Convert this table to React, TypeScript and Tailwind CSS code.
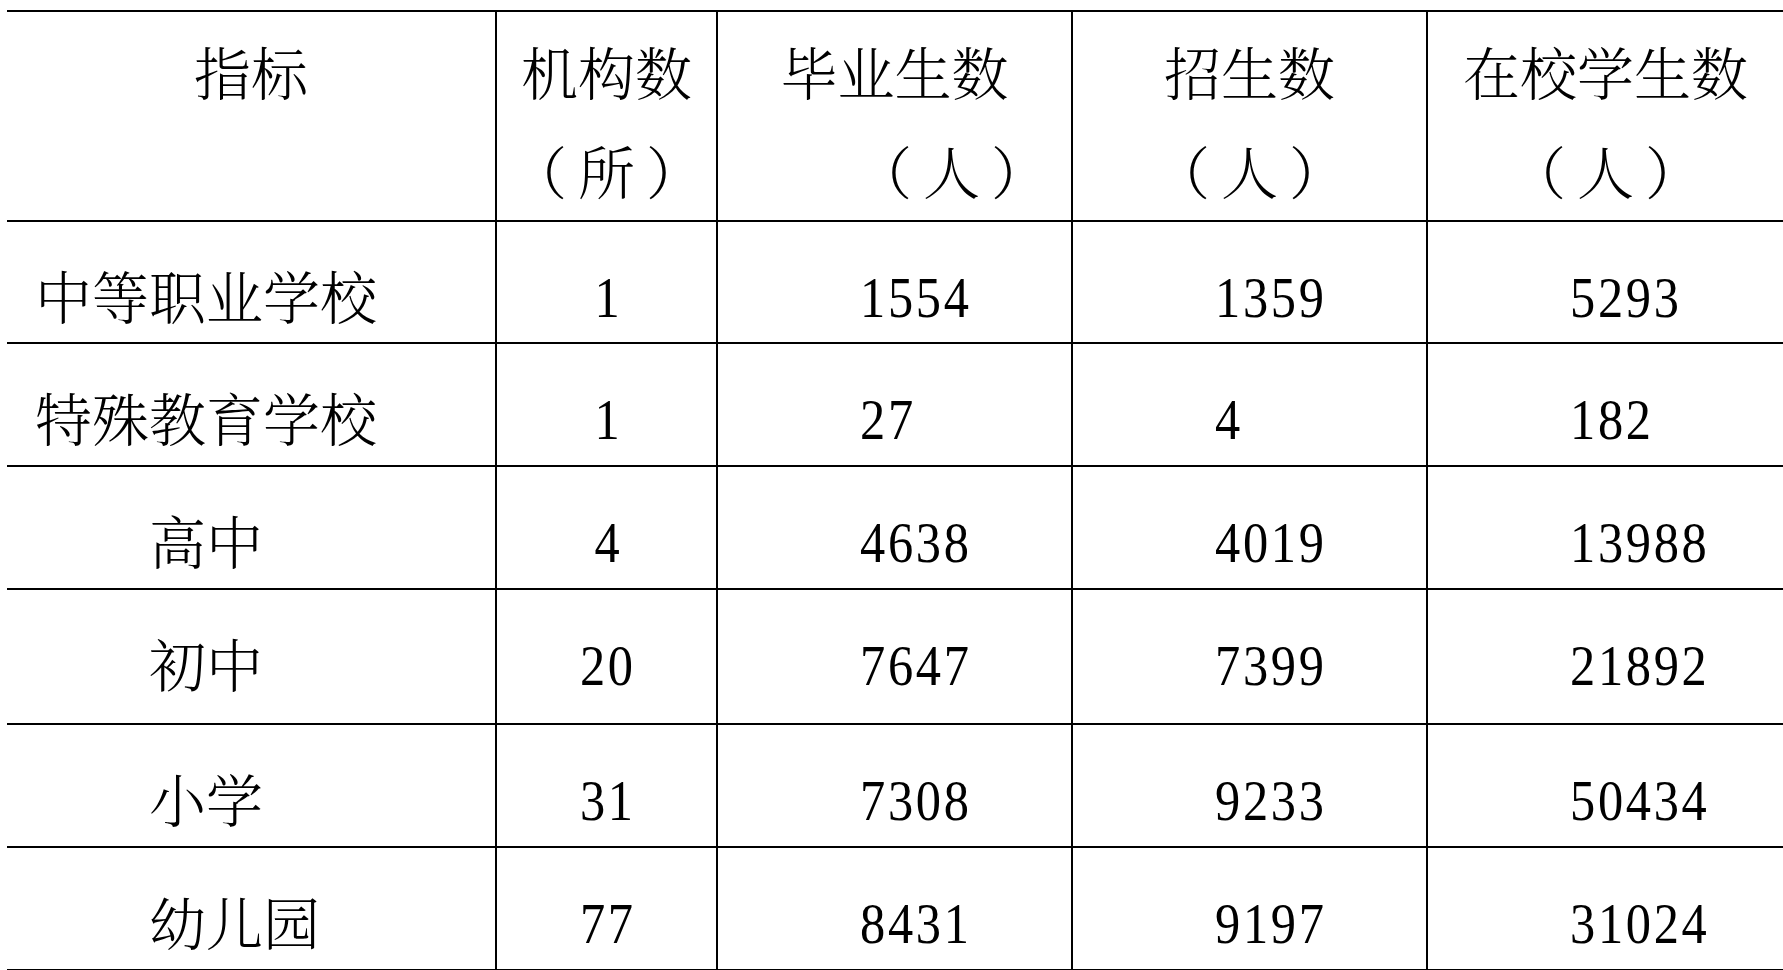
import React from "react";

const FONT =
  "[font-family:'Liberation_Serif','Noto_Serif_CJK_SC','Noto_Sans_CJK_SC',serif]";

type Row = {
  label: string;
  indent: boolean;
  h: string;
  v: [string, string, string, string];
};

const rows: Row[] = [
  { label: "中等职业学校", indent: false, h: "h-[122px]", v: ["1", "1554", "1359", "5293"] },
  { label: "特殊教育学校", indent: false, h: "h-[123px]", v: ["1", "27", "4", "182"] },
  { label: "高中", indent: true, h: "h-[123px]", v: ["4", "4638", "4019", "13988"] },
  { label: "初中", indent: true, h: "h-[135px]", v: ["20", "7647", "7399", "21892"] },
  { label: "小学", indent: true, h: "h-[123px]", v: ["31", "7308", "9233", "50434"] },
  { label: "幼儿园", indent: true, h: "h-[123px]", v: ["77", "8431", "9197", "31024"] },
];

function Num({ children, center }: { children: string; center?: boolean }) {
  return (
    <span
      className={`inline-block text-[56px] tracking-[3px] scale-x-[0.9] ${
        center ? "origin-center pl-[3px]" : "origin-left"
      }`}
    >
      {children}
    </span>
  );
}

export default function App() {
  return (
    <div className={`h-[970px] w-full overflow-hidden bg-white text-black ${FONT}`}>
      <div className="pt-[10px] pl-[7px]">
        <div className="w-[1776px] border-t-2 border-black text-[57px] font-light">
          {/* header */}
          <div className="flex h-[210px] border-b-2 border-black leading-[99px]">
            <div className="w-[488px] pt-[14px] text-center">指标</div>
            <div className="w-[221px] border-l-2 border-black pt-[14px] text-center">
              <div>机构数</div>
              <div className="tracking-[11px] pl-[11px]">（所）</div>
            </div>
            <div className="w-[355px] border-l-2 border-black pt-[14px] text-center">
              <div>毕业生数</div>
              <div className="tracking-[11px] pl-[125px]">（人）</div>
            </div>
            <div className="w-[355px] border-l-2 border-black pt-[14px] text-center">
              <div>招生数</div>
              <div className="tracking-[11px] pl-[11px]">（人）</div>
            </div>
            <div className="w-[357px] border-l-2 border-black pt-[14px] text-center">
              <div>在校学生数</div>
              <div className="tracking-[11px] pl-[11px]">（人）</div>
            </div>
          </div>
          {/* body */}
          {rows.map((r) => (
            <div key={r.label} className={`flex ${r.h} border-b-2 border-black leading-[60px]`}>
              <div className={`w-[488px] pt-[48px] ${r.indent ? "pl-[142px]" : "pl-[28px]"}`}>
                {r.label}
              </div>
              <div className="w-[221px] border-l-2 border-black pt-[46px] text-center">
                <Num center>{r.v[0]}</Num>
              </div>
              <div className="w-[355px] border-l-2 border-black pt-[46px] pl-[142px]">
                <Num>{r.v[1]}</Num>
              </div>
              <div className="w-[355px] border-l-2 border-black pt-[46px] pl-[142px]">
                <Num>{r.v[2]}</Num>
              </div>
              <div className="w-[357px] border-l-2 border-black pt-[46px] pl-[142px]">
                <Num>{r.v[3]}</Num>
              </div>
            </div>
          ))}
        </div>
      </div>
    </div>
  );
}
